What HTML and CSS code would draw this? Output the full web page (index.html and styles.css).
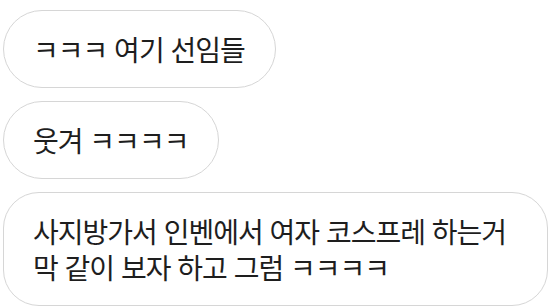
FILE: index.html
```html
<!DOCTYPE html>
<html lang="ko">
<head>
    <meta charset="UTF-8">
    <title>채팅</title>
    <link rel="stylesheet" href="styles.css">
</head>
<body>

    <div class="chat">
        <div class="bubble">ㅋㅋㅋ 여기 선임들</div>
        <div class="bubble">웃겨 ㅋㅋㅋㅋ</div>
        <div class="bubble wide">사지방가서 인벤에서 여자 코스프레 하는거 막 같이 보자 하고 그럼 ㅋㅋㅋㅋ</div>
    </div>

</body>
</html>
```

FILE: styles.css
```css
body { margin: 0; background: #fff; font-family: "Noto Sans CJK KR", "Noto Sans", sans-serif; color: #1e1e1e; }
.chat { display: flex; flex-direction: column; align-items: flex-start; gap: 13px; padding: 10px 7px 0 3px; }
.bubble { background: #fff; border: 1px solid #d6d6d6; border-radius: 40px; padding: 20px 30px 20px 29px; font-size: 28px; letter-spacing: -1px; line-height: 36px; word-break: keep-all; }
.bubble.wide { align-self: stretch; border-radius: 36px; padding-right: 26px; }
```
